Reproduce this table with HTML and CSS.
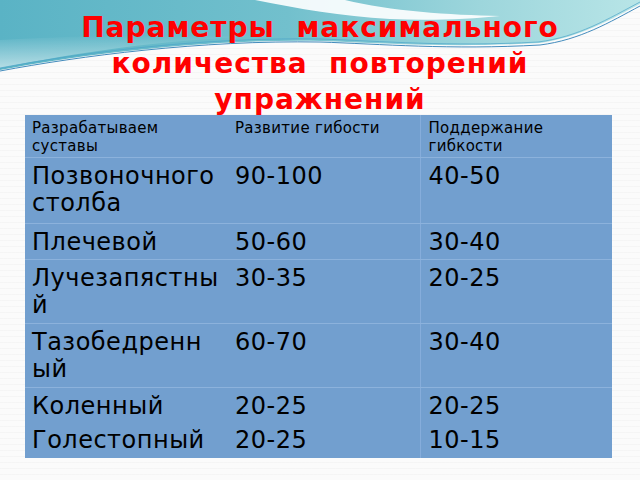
FILE: index.html
```html
<!DOCTYPE html>
<html lang="ru">
<head>
<meta charset="utf-8">
<title>Параметры максимального количества повторений упражнений</title>
<link rel="stylesheet" href="styles.css">
</head>
<body>
<div class="slide">
  <svg class="backdrop" width="640" height="110" viewBox="0 0 640 110" aria-hidden="true">
    <defs>
      <linearGradient id="teal" x1="0" y1="0" x2="1" y2="0">
        <stop offset="0" stop-color="#5ab3c5"/>
        <stop offset="0.45" stop-color="#72c0cd"/>
        <stop offset="0.75" stop-color="#9dd6dc"/>
        <stop offset="1" stop-color="#b8e5e7"/>
      </linearGradient>
      <linearGradient id="haze" x1="0" y1="0" x2="0" y2="1">
        <stop offset="0" stop-color="#ffffff" stop-opacity="0"/>
        <stop offset="1" stop-color="#ffffff" stop-opacity="0.55"/>
      </linearGradient>
    </defs>
    <path d="M0,0 H640 V4 C610,20 580,37 540,43 C450,48 380,43 320,41 C200,39 80,55 0,70 Z" fill="url(#teal)"/>
    <path d="M0,40 C70,36 150,34 260,36 C160,40 80,52 0,68 Z" fill="url(#haze)"/>
    <path d="M255,0 C300,9 340,16 390,19 C430,21 470,19 500,16 C450,15 390,11 345,0 Z" fill="#ffffff" opacity="0.9"/>
    <path d="M0,71 C80,56 200,40 320,42 C380,44 450,50 540,45 C580,40 610,22 640,6" fill="none" stroke="#2f7fb6" stroke-width="0.9"/>
    <path d="M0,68 C80,53 200,37 320,39 C380,41 450,47 538,42 C578,37 608,19 640,2" fill="none" stroke="#4aa3c9" stroke-width="0.7"/>
  </svg>

  <h1 class="title">Параметры&nbsp; максимального<br>количества&nbsp; повторений<br>упражнений</h1>

  <table class="grid">
    <colgroup>
      <col class="c-joint">
      <col class="c-dev">
      <col class="c-keep">
    </colgroup>
    <tr class="head">
      <td>Разрабатываем суставы</td>
      <td>Развитие гибости</td>
      <td class="last">Поддержание гибкости</td>
    </tr>
    <tr class="r-tall">
      <td>Позвоночного столба</td>
      <td>90-100</td>
      <td class="last">40-50</td>
    </tr>
    <tr class="r-short">
      <td>Плечевой</td>
      <td>50-60</td>
      <td class="last">30-40</td>
    </tr>
    <tr class="r-mid">
      <td>Лучезапястный</td>
      <td>30-35</td>
      <td class="last">20-25</td>
    </tr>
    <tr class="r-mid">
      <td>Тазобедренный</td>
      <td>60-70</td>
      <td class="last">30-40</td>
    </tr>
    <tr class="r-pair">
      <td>Коленный</td>
      <td>20-25</td>
      <td class="last">20-25</td>
    </tr>
    <tr class="r-end">
      <td>Голестопный</td>
      <td>20-25</td>
      <td class="last">10-15</td>
    </tr>
  </table>
</div>
</body>
</html>
```

FILE: styles.css
```css
html, body {
  margin: 0;
  padding: 0;
}

body {
  width: 640px;
  height: 480px;
  overflow: hidden;
  background-color: #fbfbfb;
  background-image: repeating-linear-gradient(0deg, rgba(0,0,0,0) 0 5px, rgba(0,0,0,0.025) 5px 6px);
  font-family: "DejaVu Sans", "Liberation Sans", sans-serif;
}

.slide {
  position: relative;
  width: 640px;
  height: 480px;
  display: flex;
  flex-direction: column;
}

.backdrop {
  position: absolute;
  top: 0;
  left: 0;
  z-index: 0;
}

.title {
  position: relative;
  z-index: 1;
  box-sizing: border-box;
  height: 115px;
  margin: 0;
  padding-top: 10px;
  font-size: 28px;
  font-weight: bold;
  line-height: 36px;
  letter-spacing: 1px;
  color: #ff0000;
  text-align: center;
}

.grid {
  position: relative;
  z-index: 1;
  margin-left: 25px;
  width: 587px;
  table-layout: fixed;
  border-collapse: collapse;
  background: #729fcf;
  color: #000;
}

.c-joint { width: 202px; }
.c-dev { width: 193px; }
.c-keep { width: 192px; }

.grid td {
  vertical-align: top;
  padding: 5px 7px 0 8px;
  font-size: 24px;
  line-height: 27.5px;
  letter-spacing: 0.5px;
  overflow-wrap: anywhere;
  border-bottom: 1px solid #8cb2dc;
}

.grid td:first-child {
  padding-left: 7px;
}

.grid td.last {
  border-left: 1px solid #86addb;
}

.grid .head td {
  padding-top: 4px;
  font-size: 15px;
  line-height: 18px;
  letter-spacing: 0.3px;
}

.head { height: 42px; }
.r-tall { height: 66px; }
.r-short { height: 36px; }
.r-mid { height: 64px; }
.r-pair { height: 35px; }
.r-end { height: 36px; }

.grid .r-pair td,
.grid .r-end td {
  border-bottom: none;
}
```
